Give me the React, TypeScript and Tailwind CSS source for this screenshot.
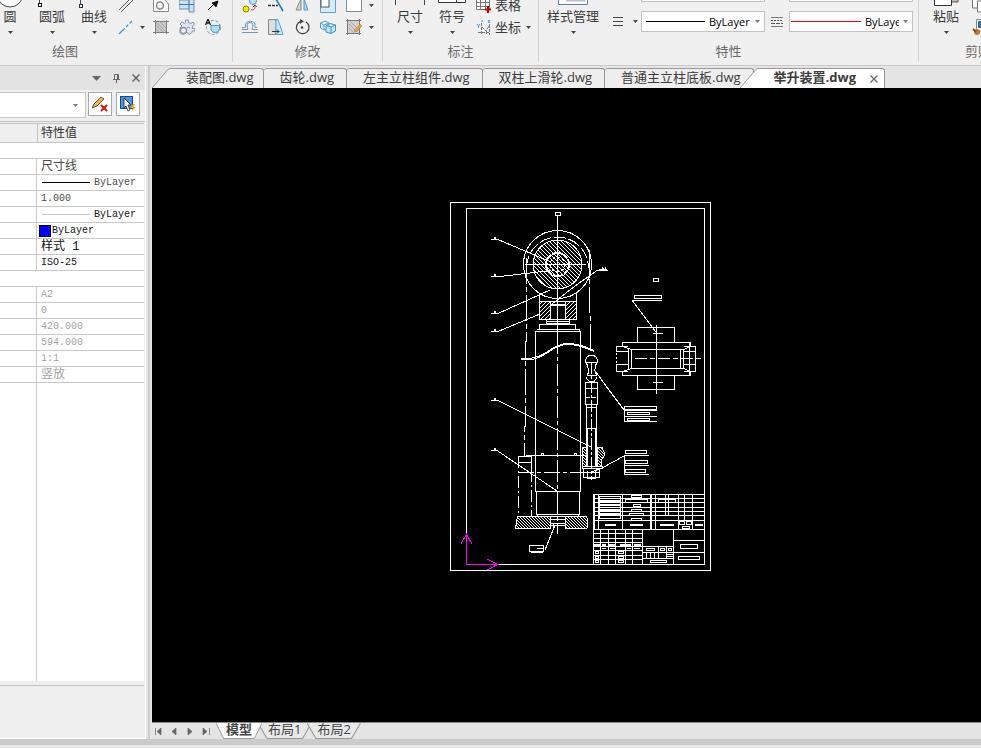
import type { ReactNode } from "react";

const UI_FONT = "font-['Open_Sans','Noto_Sans_CJK_SC',sans-serif]";
const MONO_FONT = "font-['Liberation_Mono','Noto_Sans_CJK_SC',monospace]";

/* ---------- small shared pieces ---------- */

function Caret({ className = "text-[#444]" }: { className?: string }) {
  return (
    <svg width="5" height="3" viewBox="0 0 5 3" className={`shrink-0 ${className}`} aria-hidden="true">
      <path d="M0 0H5L2.500 3Z" fill="currentColor" />
    </svg>
  );
}

function Icon({ children, size = 16 }: { children: ReactNode; size?: number }) {
  return (
    <svg width={size} height={size} viewBox={`0 0 ${size} ${size}`} fill="none" className="shrink-0" aria-hidden="true">
      {children}
    </svg>
  );
}

function BigButton({ label, wide, children }: { label: string; wide?: boolean; children: ReactNode }) {
  return (
    <button type="button" className={`flex shrink-0 flex-col items-center ${wide ? "w-[68px]" : "w-[42px]"}`}>
      <svg width="32" height="32" viewBox="0 0 32 32" fill="none" aria-hidden="true">
        {children}
      </svg>
      <span className="h-[18px] whitespace-nowrap leading-4">{label}</span>
      <span className="flex h-3 items-center">
        <Caret />
      </span>
    </button>
  );
}

function Tool({ label, children }: { label: string; children: ReactNode }) {
  return (
    <button type="button" aria-label={label} className="flex h-[22px] w-[26px] items-center justify-center">
      {children}
    </button>
  );
}

function DropTool({ label }: { label: string }) {
  return (
    <button type="button" aria-label={label} className="flex h-[22px] w-2 items-center justify-center">
      <Caret />
    </button>
  );
}

function Group({ title, className = "", children }: { title: string; className?: string; children: ReactNode }) {
  return (
    <section className={`flex h-full shrink-0 flex-col justify-end border-r border-[#d2d2d2] ${className}`}>
      <div className="flex shrink-0 items-end pb-1">{children}</div>
      <h2 className="h-5 shrink-0 text-center leading-[18px] text-[#6a6a6a]">{title}</h2>
    </section>
  );
}

/* ---------- ribbon ---------- */

function DrawGroup() {
  return (
    <Group title="绘图" className="w-[233px] [&>h2]:pr-[102px]">
      <div className="-ml-[11px] flex">
        <BigButton label="圆">
          <circle cx="16" cy="18" r="13" fill="#fff" stroke="#444" />
        </BigButton>
        <BigButton label="圆弧">
          <path d="M3.500 27V16A20 20 0 0 1 25 4" stroke="#444" />
          <rect x="2.500" y="27.500" width="3" height="3" fill="#fff" stroke="#111" />
        </BigButton>
        <BigButton label="曲线">
          <path d="M2.500 28V14C9 2 15 24 27 4" stroke="#444" />
          <rect x="1.500" y="28.500" width="3" height="3" fill="#fff" stroke="#334" />
        </BigButton>
      </div>
      <div className="ml-[3px] grid grid-cols-[20px_10px_26px_26px_26px] items-center">
        <Icon>
          <path d="M1 13L14 0M3 15L16 2" stroke="#555" />
        </Icon>
        <span />
        <Tool label="面域">
          <Icon>
            <path d="M.5.5H10L15.500 7V14.500H.5Z" fill="#fff" stroke="#888" />
            <circle cx="7" cy="8.500" r="3.500" stroke="#888" strokeWidth="1.500" />
          </Icon>
        </Tool>
        <Tool label="表面">
          <Icon>
            <path d="M0 3H10V12H0ZM10 1H15V15H10Z" fill="#cfe0f2" stroke="#6a8fb8" />
            <path d="M0 7.500H15" stroke="#2d7fc4" />
          </Icon>
        </Tool>
        <Tool label="箭头">
          <Icon>
            <path d="M3 13L10 6" stroke="#111" />
            <path d="M13 4L7 6L11 10Z" fill="#111" stroke="#111" />
          </Icon>
        </Tool>
        <Icon>
          <path d="M1 15L14 2" stroke="#1ea2dc" strokeWidth="1.300" strokeDasharray="8 2 3 2" />
        </Icon>
        <DropTool label="直线选项" />
        <Tool label="图案填充">
          <Icon>
            <rect x="3" y="3" width="10" height="10" fill="#c8c8cc" />
            <path d="M3 6L10 13M3 3L13 13M7 3L13 9M3 10L6 13" stroke="#a9a9ad" />
            <path d="M2.500 1V15M13.500 1V15M0 2.500H16M0 13.500H16" stroke="#808080" />
          </Icon>
        </Tool>
        <Tool label="零件">
          <Icon>
            <path
              d="M6.500 1H9.500V3.500L12 4.500L14 3L15.500 5.500L13.500 7V9.500H16V12H13.500L12.500 14L10 15.500L8 13L4 15.500L1 14L1 9L3 7L1 5L3 3L5.500 4.500L6.500 3.500Z"
              fill="#dfe6f3"
              stroke="#8793aa"
            />
            <circle cx="4.500" cy="11.500" r="3" fill="#f0f0f0" stroke="#8793aa" strokeWidth="1.300" />
            <path d="M8 9A2 2 0 0 1 11 9" stroke="#8793aa" />
          </Icon>
        </Tool>
        <Tool label="文字旋转">
          <Icon>
            <circle cx="8.500" cy="8.500" r="7" stroke="#888" strokeDasharray="3 2" />
            <path d="M6 6.500H14.500V10A4.500 4.500 0 0 1 6 11Z" fill="#aee0f5" stroke="#3a9ac9" />
            <path d="M.5 6L3 0L5.500 6M1.500 4H4.500" stroke="#222" strokeWidth="1.300" />
          </Icon>
        </Tool>
      </div>
    </Group>
  );
}

function ModifyGroup() {
  return (
    <Group title="修改" className="w-[150px]">
      <div className="ml-1 grid grid-cols-[26px_26px_26px_26px_26px_8px]">
        <Tool label="复制">
          <Icon>
            <circle cx="4" cy="12" r="3" fill="#f7e600" stroke="#8a8000" />
            <circle cx="11" cy="4" r="3.500" fill="#bfe3f7" stroke="#4b9ccb" />
            <path d="M9 13C13 13 13 11 13 9M11 10L13 8L15 10" stroke="#a33" />
          </Icon>
        </Tool>
        <Tool label="修剪">
          <Icon>
            <path d="M0 8.500H10" stroke="#333" strokeWidth="1.500" strokeDasharray="3 1" />
            <path d="M8 2L15 14" stroke="#1677c5" strokeWidth="1.500" />
          </Icon>
        </Tool>
        <Tool label="镜像">
          <Icon>
            <path d="M7 2V13H2Z" fill="#d5d5d5" stroke="#888" />
            <path d="M10 2V13H14Z" fill="#aadcf5" stroke="#4b9ccb" />
          </Icon>
        </Tool>
        <Tool label="缩放">
          <Icon>
            <path d="M.5.5H15.500V15.500H.5Z" fill="#d3edfb" stroke="#4ba8d8" />
            <rect x="1" y="2" width="8" height="8" fill="#fff" stroke="#555" />
          </Icon>
        </Tool>
        <Tool label="矩形">
          <Icon>
            <rect x=".5" y=".5" width="15" height="14" fill="#fff" stroke="#888" />
            <path d="M.5 0V15" stroke="#4ba8d8" strokeDasharray="2 1" />
          </Icon>
        </Tool>
        <DropTool label="矩形选项" />
        <Tool label="偏移">
          <Icon>
            <path d="M0 13.500H16M0 10.500H6L5 6A3 2.500 0 0 1 11 6L10 10.500H16" stroke="#7d93ad" />
            <path d="M0 8.500H3.500V5A5 4 0 0 1 13 5V8.500H15" stroke="#5ba3cf" />
          </Icon>
        </Tool>
        <Tool label="拉伸">
          <Icon>
            <path d="M.5.5H8V15.500H.5Z" fill="#dedede" stroke="#888" />
            <path d="M8 .5H10L15 15.500H8Z" fill="#c9e9f9" stroke="#5ba3cf" />
            <path d="M4 12.500H11M9 10.500L11 12.500L9 14.500" stroke="#333" />
          </Icon>
        </Tool>
        <Tool label="旋转">
          <Icon>
            <path d="M12 3A6.300 6.300 0 1 1 7 2.300" stroke="#444" strokeWidth="1.300" />
            <path d="M6 0L10 2.300L6 5Z" fill="#444" />
            <circle cx="8" cy="8.500" r="1.300" fill="#444" />
          </Icon>
        </Tool>
        <Tool label="三维阵列">
          <Icon>
            <path d="M.5 4L5 2L9 4V9L4 11L.5 9ZM.5 4L4 6L9 4M4 6V11" fill="#d3edfb" stroke="#5ba3cf" />
            <path d="M6 6.500L10 4.500L15.500 6V12L11 14.500L6 13ZM6 6.500L11 8L15.500 6M11 8V14" fill="#bfe5f8" stroke="#3a94c8" />
          </Icon>
        </Tool>
        <Tool label="填充编辑">
          <Icon>
            <rect x="2" y="2" width="11" height="12" fill="#cfcfd4" />
            <path d="M3 5L11 13M3 9L8 14M5 3L13 11" stroke="#a9a9ad" />
            <path d="M1.500 0V16M13.500 0V16M0 1.500H15M0 14.500H15" stroke="#777" />
            <path d="M8 12L14 5L16 7L10 13Z" fill="#e8a33b" stroke="#a5701a" strokeWidth=".5" />
          </Icon>
        </Tool>
        <DropTool label="填充编辑选项" />
      </div>
    </Group>
  );
}

function AnnotateGroup() {
  return (
    <Group title="标注" className="w-[156px]">
      <div className="ml-[6px] flex">
        <BigButton label="尺寸">
          <path d="M1.500 4V29M30.500 4V29M2 12.500H30" stroke="#444" />
        </BigButton>
        <BigButton label="符号">
          <path d="M2.500 8.500H29.500V26.500H2.500ZM20.500 8V26" fill="#fff" stroke="#333" />
        </BigButton>
      </div>
      <div className="ml-[3px] flex flex-col">
        <button type="button" className="flex h-[22px] items-center gap-[3px]">
          <Icon>
            <path d="M.5 1.500H13.500V12.500H.5ZM.5 5.500H13.500M.5 9.500H13.500M4.500 2V12M9.500 2V12" fill="#fff" stroke="#777" />
            <path d="M12 9V16M9 12.500H15" stroke="#c00" strokeWidth="2" />
          </Icon>
          <span className="leading-4">表格</span>
        </button>
        <button type="button" className="flex h-[22px] items-center gap-[3px]">
          <Icon>
            <path d="M5.500 4V16M2 13.500H14M6 8L10 12L14 5M10.500 12V16M13.500 6V16" stroke="#777" strokeDasharray="3 1" />
            <path d="M1 5L2.500 7L4 5M2.500 7V9M12 1L14 4M14 1L12 4M6 1V3" stroke="#3e9fd6" />
          </Icon>
          <span className="leading-4">坐标</span>
          <span className="pl-[2px]">
            <Caret />
          </span>
        </button>
      </div>
    </Group>
  );
}

function PropertySelect({ label, line }: { label: string; line: string }) {
  return (
    <div className="flex h-[21px] w-[124px] items-center border border-[#c2c2c2] bg-white pr-1">
      <span className={`h-px shrink-0 ${line}`} />
      <select
        aria-label={label}
        className="mr-[4px] w-0 min-w-0 flex-1 appearance-none overflow-hidden bg-transparent pl-1 text-[11px] leading-4 text-black outline-none"
      >
        <option>ByLayer</option>
      </select>
      <Caret className="text-[#777]" />
    </div>
  );
}

function PropertiesGroup() {
  return (
    <Group title="特性" className="w-[380px]">
      <BigButton label="样式管理" wide>
        <path d="M1.500 2H30.500V28.500H1.500Z" fill="#fff" stroke="#5d7fa8" />
        <path d="M9 24H28" stroke="#b8bcdc" strokeWidth="3" />
      </BigButton>
      <div className="mb-[6px] ml-[6px] grid grid-cols-[auto_auto_auto_auto_auto] items-center gap-y-[9px]">
        <span />
        <span />
        <PropertySelect label="颜色" line="ml-[5px] w-[58px] bg-black" />
        <span />
        <PropertySelect label="打印样式" line="ml-px w-[70px] bg-[#ff0000]" />
        <svg width="10" height="9" viewBox="0 0 10 9" aria-hidden="true">
          <path d="M0 .5H10M0 4.500H10M0 8.500H10" stroke="#444" />
        </svg>
        <span className="flex w-[18px] justify-end pr-[3px]">
          <Caret />
        </span>
        <PropertySelect label="线型" line="ml-1 w-[59px] bg-black" />
        <span className="flex w-6 justify-center">
          <svg width="12" height="10" viewBox="0 0 12 10" aria-hidden="true">
            <path d="M0 .5H12M0 9.500H12" stroke="#777" />
            <path d="M0 3.500H12" stroke="#555" strokeDasharray="2 1" />
            <path d="M0 6.500H12" stroke="#555" strokeDasharray="4 1" />
          </svg>
        </span>
        <PropertySelect label="线宽" line="ml-px w-[70px] bg-[#ff0000]" />
      </div>
    </Group>
  );
}

function ClipboardGroup() {
  return (
    <Group title="剪贴板" className="w-[132px]">
      <div className="ml-[6px] flex">
        <BigButton label="粘贴">
          <path d="M20 4H28V26H20Z" fill="#cdb9a4" stroke="#555" />
          <path d="M4.500 10H21.500V29.500H4.500Z" fill="#fff" stroke="#334" />
        </BigButton>
      </div>
      <div className="flex flex-col">
        <Tool label="复制到剪贴板">
          <Icon>
            <path d="M.5 0H10V11H.5Z" fill="#fff" stroke="#777" />
            <path d="M5.500 4H15V15H5.500Z" fill="#fff" stroke="#777" />
          </Icon>
        </Tool>
        <Tool label="特性匹配">
          <Icon>
            <path d="M4.500.5H15V12H4.500Z" fill="#fff" stroke="#888" />
            <rect x="6" y="2" width="8" height="7" fill="#2b6fb5" />
            <circle cx="5" cy="13" r="3" fill="#c0782c" />
            <path d="M1 10L4 13" stroke="#8a4a10" strokeWidth="2" />
          </Icon>
        </Tool>
      </div>
    </Group>
  );
}

function Ribbon() {
  return (
    <header className="flex h-[66px] shrink-0 overflow-hidden border-b border-[#c9c9c9] bg-[#f0f0f0] pb-[3px] text-[13px] text-[#3c3c3c]">
      <DrawGroup />
      <ModifyGroup />
      <AnnotateGroup />
      <PropertiesGroup />
      <ClipboardGroup />
    </header>
  );
}

/* ---------- property palette ---------- */

type Row = { value?: ReactNode; name?: boolean; tone?: string };

const DARK = "text-[#111]";
const SOFT = "text-[#4a4a4a]";
const MUTED = "text-[#a2a2a2]";

function Hanzi({ children }: { children: ReactNode }) {
  return <span className="block pt-[2px] text-[12px] leading-[13px]">{children}</span>;
}

function Sample({ line }: { line: string }) {
  return (
    <span className="flex items-center gap-1 pl-px">
      <span className={`h-px w-12 ${line}`} />
      ByLayer
    </span>
  );
}

const ROWS: Row[] = [
  { name: false },
  { value: <Hanzi>尺寸线</Hanzi>, tone: SOFT },
  { value: <Sample line="bg-black" />, tone: SOFT },
  { value: "1.000", tone: SOFT },
  { value: <Sample line="bg-[#c8c8c8]" />, tone: DARK },
  {
    value: (
      <span className="-ml-[2px] flex items-center gap-px">
        <span className="size-3 border border-black bg-[#00f]" />
        ByLayer
      </span>
    ),
    tone: DARK,
  },
  { value: <Hanzi>样式 1</Hanzi>, tone: DARK },
  { value: "ISO-25", tone: DARK },
  { name: false },
  { value: "A2", tone: MUTED },
  { value: "0", tone: MUTED },
  { value: "420.000", tone: MUTED },
  { value: "594.000", tone: MUTED },
  { value: "1:1", tone: MUTED },
  { value: <Hanzi>竖放</Hanzi>, tone: MUTED },
];

function Palette() {
  return (
    <aside className="flex w-[146px] shrink-0 flex-col border-r border-white bg-[#efefef]">
      <div className="flex h-6 shrink-0 items-center justify-end gap-3 bg-[#e3e3e3] pr-[5px] text-[#666]">
        <button type="button" aria-label="菜单">
          <svg width="9" height="5" viewBox="0 0 9 5" aria-hidden="true">
            <path d="M0 0H9L4.500 5Z" fill="currentColor" />
          </svg>
        </button>
        <button type="button" aria-label="固定">
          <svg width="7" height="9" viewBox="0 0 7 9" fill="none" aria-hidden="true">
            <path d="M1.500 5V.5H5.500V5M4.500 1V5M0 5.500H7M3.500 6V9" stroke="currentColor" />
          </svg>
        </button>
        <button type="button" aria-label="关闭">
          <svg width="8" height="8" viewBox="0 0 8 8" fill="none" aria-hidden="true">
            <path d="M.5.5L7.500 7.500M7.500.5L.5 7.500" stroke="currentColor" strokeWidth="1.500" />
          </svg>
        </button>
      </div>

      <div className="flex h-8 shrink-0 items-start border-b border-[#c4c4c4] pt-[2px] pr-[5px]">
        <div className="flex h-[26px] min-w-0 flex-1 items-center border border-l-0 border-[#c6c6c6] bg-white pr-[7px]">
          <select aria-label="对象" className="min-w-0 flex-1 appearance-none bg-transparent text-[12px] outline-none">
            <option></option>
          </select>
          <Caret className="text-[#777]" />
        </div>
        <button
          type="button"
          aria-label="清除选择"
          className="ml-[2px] flex h-6 w-6 items-center justify-center border border-[#aaa] bg-white"
        >
          <Icon>
            <path d="M0 12L2 8L9 1L12 3L5 10Z" fill="#f2b544" stroke="#333" strokeWidth=".8" />
            <path d="M9 9L15 15M15 9L9 15" stroke="#d11" strokeWidth="2" />
          </Icon>
        </button>
        <button
          type="button"
          aria-label="快速选择"
          className="ml-1 flex h-6 w-6 items-center justify-center border border-[#aaa] bg-white"
        >
          <Icon>
            <rect x=".5" y=".5" width="12" height="12" fill="#4a96e0" stroke="#174a8c" />
            <path d="M4 2L4 12L6 10L8 15L10 14L8 9H11Z" fill="#fff" stroke="#222" strokeWidth=".8" />
            <path d="M13 8L10 12H13L11 16L16 11H13L15 8Z" fill="#f6a21b" />
          </Icon>
        </button>
      </div>

      <div className="flex min-h-0 flex-1 flex-col pt-px pr-px">
        <table className={`w-full table-fixed border-separate border-spacing-0 bg-white text-[10px] ${MONO_FONT}`}>
          <thead>
            <tr className="h-5 bg-[#efefef]">
              <th className="w-[38px] border-y border-r border-[#c4c4c4] p-0" aria-label="特性" />
              <th className="border-y border-[#c4c4c4] p-0 pt-[2px] pl-[3px] text-left text-[12px] leading-4 font-normal text-[#333]">
                特性值
              </th>
            </tr>
          </thead>
        </table>
        <table className={`w-full table-fixed border-separate border-spacing-0 bg-white text-[10px] ${MONO_FONT}`}>
          <colgroup>
            <col className="w-[37px]" />
            <col />
          </colgroup>
          <tbody>
            {ROWS.map((row, i) =>
              row.name === false ? (
                <tr key={i} className="h-4">
                  <td colSpan={2} className="border-b border-[#c8c8c8] p-0" />
                </tr>
              ) : (
                <tr key={i} className="h-4">
                  <td className="border-r border-b border-[#c8c8c8] p-0" />
                  <td className={`border-b border-[#c8c8c8] p-0 pl-1 leading-[15px] whitespace-nowrap ${row.tone}`}>{row.value}</td>
                </tr>
              ),
            )}
          </tbody>
        </table>
        <div className="flex min-h-0 flex-1 bg-white">
          <div className="w-[37px] border-r border-[#c8c8c8]" />
        </div>
      </div>
      <div className="mt-1 mr-px h-[53px] shrink-0 border-t border-[#c4c4c4]" />
      <div className="h-px shrink-0 bg-white" />
    </aside>
  );
}

/* ---------- document tabs ---------- */

function Slant({ fill }: { fill: string }) {
  return (
    <svg width="18" height="20" viewBox="0 0 18 20" className="shrink-0" aria-hidden="true">
      <path d="M0 20L16 1.500Q17 .5 18 .5V20Z" fill={fill} />
      <path d="M0 20L16 1.500Q17 .5 18 .5" fill="none" stroke="#999" />
    </svg>
  );
}

const FILES = ["齿轮.dwg", "左主立柱组件.dwg", "双柱上滑轮.dwg", "普通主立柱底板.dwg"];

function FileTabs() {
  const body = "flex h-5 items-start rounded-tr-[3px] border-t border-r border-[#999] bg-[#eee] leading-4 whitespace-nowrap";
  return (
    <nav className="flex h-[22px] shrink-0 items-end bg-[#e4e4e4] text-[13px] text-[#3c3c3c]">
      <button type="button" className="flex">
        <Slant fill="#eee" />
        <span className={`${body} pr-[9px] pl-4`}>装配图.dwg</span>
      </button>
      {FILES.map((file) => (
        <button type="button" key={file} className={`${body} rounded-tl-[3px] pr-3 pl-4`}>
          {file}
        </button>
      ))}
      <div className="relative -ml-[14px] flex">
        <Slant fill="#fff" />
        <button
          type="button"
          className="flex h-5 items-start border-t border-[#999] bg-white pl-4 leading-4 font-bold whitespace-nowrap"
        >
          举升装置.dwg
        </button>
        <button
          type="button"
          aria-label="关闭文件"
          className="flex h-5 items-center rounded-tr-[3px] border-t border-r border-[#999] bg-white pr-[6px] pl-[14px]"
        >
          <svg width="8" height="8" viewBox="0 0 8 8" aria-hidden="true">
            <path d="M.5.5L7.500 7.500M7.500.5L.5 7.500" stroke="#666" strokeWidth="1.300" />
          </svg>
        </button>
      </div>
    </nav>
  );
}

/* ---------- drawing ---------- */

const LEADERS = [
  "M491 239.500H498L538 256.500L548 261",
  "M491 276.500H500L551 270.500",
  "M491 313.500H498L550 290",
  "M491 331.500H498L540 314",
  "M491 400.500H498L591 447",
  "M491 450.500H497L557 491",
  "M606 270.500H597L575 286L552 304",
  "M632.500 301L656 332",
  "M596 372L606 386L624 410",
  "M624 456L602 468L591 472",
  "M555 525L545 550",
];

const TICKS = [238, 275, 312, 330, 399, 449];

function Cad() {
  return (
    <svg
      viewBox="152 88 829 634"
      className="block h-full w-full"
      fill="none"
      stroke="#fff"
      shapeRendering="crispEdges"
      role="img"
      aria-label="举升装置"
    >
      <defs>
        <pattern id="back" width="4" height="4" patternUnits="userSpaceOnUse">
          <path d="M-1 -1L5 5M3 -1L5 1M-1 3L1 5" stroke="#fff" />
        </pattern>
        <pattern id="fwd" width="4" height="4" patternUnits="userSpaceOnUse">
          <path d="M-1 5L5 -1M-1 1L1 -1M3 5L5 3" stroke="#fff" />
        </pattern>
        <pattern id="fine" width="3" height="3" patternUnits="userSpaceOnUse">
          <path d="M-1 -1L4 4M2 -1L4 1M-1 2L1 4" stroke="#fff" />
        </pattern>
      </defs>

      {/* sheet frame */}
      <path d="M450.500 202.500H710.500V570.500H450.500ZM466.500 208.500H704.500V564.500H466.500Z" />

      {/* pulley */}
      <path d="M555.500 212.500H560.500V215.500H555.500Z" />
      <path d="M557.500 216V332" />
      <path d="M557.500 332V534" strokeDasharray="22 3 4 3" />
      <circle cx="557.500" cy="264.500" r="34" />
      <path d="M526.500 268A31 31 0 0 1 588.500 268" strokeDasharray="12 3" />
      <circle cx="557.500" cy="264.500" r="24.500" fill="url(#back)" />
      <circle cx="557.500" cy="264.500" r="11.500" strokeDasharray="5 1" strokeWidth="2" />
      <circle cx="557.500" cy="264.500" r="7.500" strokeDasharray="3 2" />
      <path d="M525 264.500H586" />
      <path d="M526.500 258V340L525.500 343V425L524.500 428V456" strokeDasharray="26 3 5 3" />
      <path d="M589.500 250V312L590.500 315V350" strokeDasharray="26 3 5 3" />

      {/* fork */}
      <path d="M539.500 293V319.500H576.500V293M539.500 301.500H576.500M550.500 301V319M565.500 301V319" />
      <path d="M540 302H550V319H540ZM566 302H576V319H566Z" fill="url(#fwd)" stroke="none" />
      <path d="M551 305H565" strokeWidth="2" />
      <path d="M546.500 319.500H569.500V323.500H546.500ZM546 321.500H570M539.500 324.500H575.500V329.500H539.500ZM536.500 329.500H579.500V331.500" />

      {/* cylinder */}
      <path d="M535.500 331.500H580.500V491.500H535.500Z" />
      <path d="M521 359.500H532Q540 358 550 351T570 344.500T594 351.500M521 358.500H530Q540 357 550 350T570 343.500T594 350.500" />
      <path d="M526 455.500H588M541.500 455V453.500H543.500V455M574.500 455V453.500H576.500V455" />
      <path d="M518.500 456.500H531.500V470M518.500 462.500H531" />
      <path d="M518.500 456V516M531.500 470V516" strokeDasharray="12 3 2 3" />
      <path d="M518 472.500H600" strokeDasharray="16 3 4 3" />
      <path d="M536.500 491.500H579.500V514.500H536.500ZM537.500 514.500V516.500H578.500V514.500" />
      <path d="M517.500 516.500H550.500V528.500H515.500ZM565.500 516.500H586.500L588 522L587 528.500H565.500Z" fill="url(#fine)" />
      <path d="M550 519.500H566M550 523.500H566M550 525.500H566M553.500 523V528" />
      <path d="M529.500 545.500H543.500V551.500H529.500ZM537 548.500H543M531 552.500H543" />

      {/* side rod */}
      <path d="M588 366A6 6 0 1 1 595 366M586 362.500H597M586.500 363Q590 371 587 376M596.500 363Q593 371 597 376M587 375.500H597M586 377Q588 382 591.500 382T597 377M589 381.500H595" />
      <path d="M585.500 382.500H597.500V404.500H585.500ZM586 388.500H597M586.500 404V467M596.500 404V467M587 407.500H597" />
      <path d="M586 397.500H597" strokeDasharray="4 2" />
      <path d="M591.500 362V480" strokeDasharray="12 2 3 2" />
      <path d="M587.500 466V428.500H595.500V466" />
      <path d="M582.500 447.500H587V466H582.500ZM597 447.500H602L604 452L604 456L601.500 460V466H597Z" fill="url(#fine)" />
      <path d="M582.500 466.500H602.500V468.500H582.500ZM583.500 468.500H599.500V477.500H583.500ZM587.500 471V477M595.500 471V477M587 478.500H596M584 472.500H599" />

      {/* leaders */}
      {LEADERS.map((d) => (
        <path key={d} d={d} />
      ))}
      {TICKS.map((y) => (
        <path key={y} d={`M494 ${y}H496`} strokeWidth="2" />
      ))}
      <path d="M597 270.500H608M599 269.500H607M602.500 267V270M605.500 267V270M603.500 268V270" />

      {/* callout tables */}
      <path d="M624.500 406V421.500H657M624.500 406.500H656.500V409.500H624.500M624 410.500H657M627.500 412.500H649.500V414.500H627.500ZM624 416.500H657M627.500 418.500H649.500V420.500H627.500Z" />
      <path d="M625.500 450.500H646.500V453.500H625.500ZM649 455.500H624.500V474.500H649M625.500 460.500H647.500V463.500H625.500ZM624 465.500H649M625.500 469.500H645.500V472.500H625.500Z" />
      <path d="M653.500 278.500H658.500V281.500H653.500ZM634.500 295.500H661.500V298.500H634.500ZM632 300.500H662" />

      {/* right view */}
      <path d="M637.500 342V327.500H674.500V342M637.500 376V389.500H674.500V376M656.500 325V394M653 333.500H663M653 382.500H663" />
      <path d="M622.500 342.500H690.500V346.500L683.500 349.500H631.500L622.500 346.500ZM622.500 375.500H690.500V371.500L683.500 368.500H631.500L622.500 371.500Z" />
      <path d="M628.500 349V369M631.500 349V369M680.500 349V369M683.500 349V369" />
      <path d="M628 346.500H616.500V352M616.500 364V371.500H628M616 351.500H628M616 364.500H628M684 346.500H695.500V371.500H684M684 351.500H696M684 364.500H696M689.500 342V376" />
      <path d="M616.500 353V364" strokeDasharray="2 2" />
      <path d="M635 358.500H701" strokeDasharray="12 3 5 3" />

      {/* title block */}
      <path d="M593.500 494.500H704.500M593.500 498.500H704.500M593.500 502.500H704.500M593.500 507.500H704.500M593.500 511.500H704.500M593.500 515.500H704.500M593.500 520.500H704.500M593.500 529.500H704.500" />
      <path d="M593.500 494V565M598.500 494V529M622.500 494V529M655.500 494V529M678.500 494V529M684.500 494V520M692.500 494V529" />
      <path d="M594 494V529M651 494V529" strokeWidth="2" />
      <path d="M599.500 496.500H620.500V500.500H599.500ZM599.500 501.500H620.500V504.500H599.500ZM599.500 505.500H620.500V509.500H599.500ZM599.500 510.500H620.500V513.500H599.500ZM599.500 514.500H620.500V518.500H599.500Z" />
      <path d="M631.500 495.500H641.500V497.500H631.500ZM625.500 499.500H647.500V502.500H625.500ZM633.500 504.500H640.500V506.500H633.500ZM631.500 509.500H641.500V511.500H631.500ZM629.500 513.500H643.500V515.500H629.500ZM631.500 518.500H641.500V520.500H631.500ZM658.500 499.500H675.500V502.500H658.500Z" fill="#000" />
      <path d="M665.500 495V516M668.500 495V516" />
      <path d="M605 525H616M630 525H643M660 525H674M695 525H703" strokeWidth="2" />
      <path d="M679.500 521.500H684.500V524.500H679.500ZM686.500 521.500H691.500V524.500H686.500ZM682.500 526.500H689.500V528.500H682.500Z" />
      <path d="M593 533.500H642M593 538.500H642M593 542.500H642M593 546.500H642M593 550.500H642M593 555.500H642M593 559.500H642M642.500 529V564M673.500 529V564" />
      <path d="M600.500 529V564M608.500 529V564M615.500 529V564M625.500 529V564M632.500 529V564" />
      <path d="M594 545H600M602 545H606M609 545H615M620 545H631M634 545H641" strokeWidth="2" />
      <path d="M602 548.500H606M610 548.500H615M627 548.500H631M634 548.500H640" />
      <path d="M595.500 551.500H598.500V553.500H595.500ZM595.500 556.500H598.500V558.500H595.500ZM595.500 560.500H598.500V562.500H595.500ZM618.500 551.500H623.500V553.500H618.500ZM618.500 556.500H623.500V558.500H618.500ZM618.500 560.500H623.500V562.500H618.500Z" />
      <path d="M642 546.500H673M642 552.500H673M642 558.500H673M658.500 546V558M666.500 546V558M646.500 552V558M650.500 552V558M654.500 552V558M666 554.500H673M666 556.500H673" />
      <path d="M646.500 548.500H654.500V550.500H646.500ZM660.500 548.500H664.500V550.500H660.500ZM668.500 548.500H671.500V550.500H668.500ZM650.500 560.500H666.500V562.500H650.500Z" />
      <path d="M673 540.500H704M673 552.500H704M680.500 544.500H697.500V548.500H680.500ZM678.500 556.500H699.500V559.500H678.500Z" />

      {/* origin marker */}
      <path d="M466.500 534V564.500H497M461 544L466.500 534L472 544M487 559L497.500 564.500L487 570" stroke="#f0f" />
    </svg>
  );
}

/* ---------- layout tabs ---------- */

function LayoutTab({ label, active }: { label: string; active?: boolean }) {
  return (
    <button type="button" className={`-ml-1 grid ${active ? "z-10 font-semibold" : ""}`}>
      <svg viewBox="0 0 48 17" preserveAspectRatio="none" className="h-4 w-full min-w-0 [grid-area:1/1]" width="48" aria-hidden="true">
        <path d="M0 0L8 16.500H40L48 0" fill={active ? "#fff" : "#e9e9e9"} stroke="#999" />
      </svg>
      <span className="px-[10px] leading-[13px] [grid-area:1/1]">{label}</span>
    </button>
  );
}

const NAV = [
  { label: "首页", d: "M1.500 0V7M7 0V7L3 3.500Z" },
  { label: "上一页", d: "M6 0V7L2 3.500Z" },
  { label: "下一页", d: "M2 0V7L6 3.500Z" },
  { label: "末页", d: "M1 0V7L5 3.500ZM7.500 0V7" },
];

function LayoutTabs() {
  return (
    <nav className="flex h-[17px] shrink-0 items-start border-t border-[#888] bg-[#e4e4e4] pl-[2px] text-[13px] text-[#444]">
      {NAV.map((item) => (
        <button type="button" key={item.label} aria-label={item.label} className="flex h-4 w-4 items-center">
          <svg width="8" height="7" viewBox="0 0 8 7" aria-hidden="true">
            <path d={item.d} fill="#666" stroke="#666" strokeWidth=".7" />
          </svg>
        </button>
      ))}
      <div className="flex pl-[2px]">
        <LayoutTab label="模型" active />
        <LayoutTab label="布局1" />
        <LayoutTab label="布局2" />
      </div>
    </nav>
  );
}

export default function App() {
  return (
    <div className={`flex h-screen flex-col overflow-hidden bg-[#e4e4e4] ${UI_FONT}`}>
      <Ribbon />
      <main className="flex min-h-0 flex-1">
        <Palette />
        <div className="w-[6px] shrink-0 border-x-2 border-[#e4e4e4] bg-[#cdcdcd]" />
        <div className="flex min-w-0 flex-1 flex-col">
          <FileTabs />
          <div className="min-h-0 flex-1 bg-black">
            <Cad />
          </div>
          <LayoutTabs />
        </div>
      </main>
      <footer className="h-[9px] shrink-0 border-t-[6px] border-[#cbcbcb] bg-[#e8e8e8]" />
    </div>
  );
}
